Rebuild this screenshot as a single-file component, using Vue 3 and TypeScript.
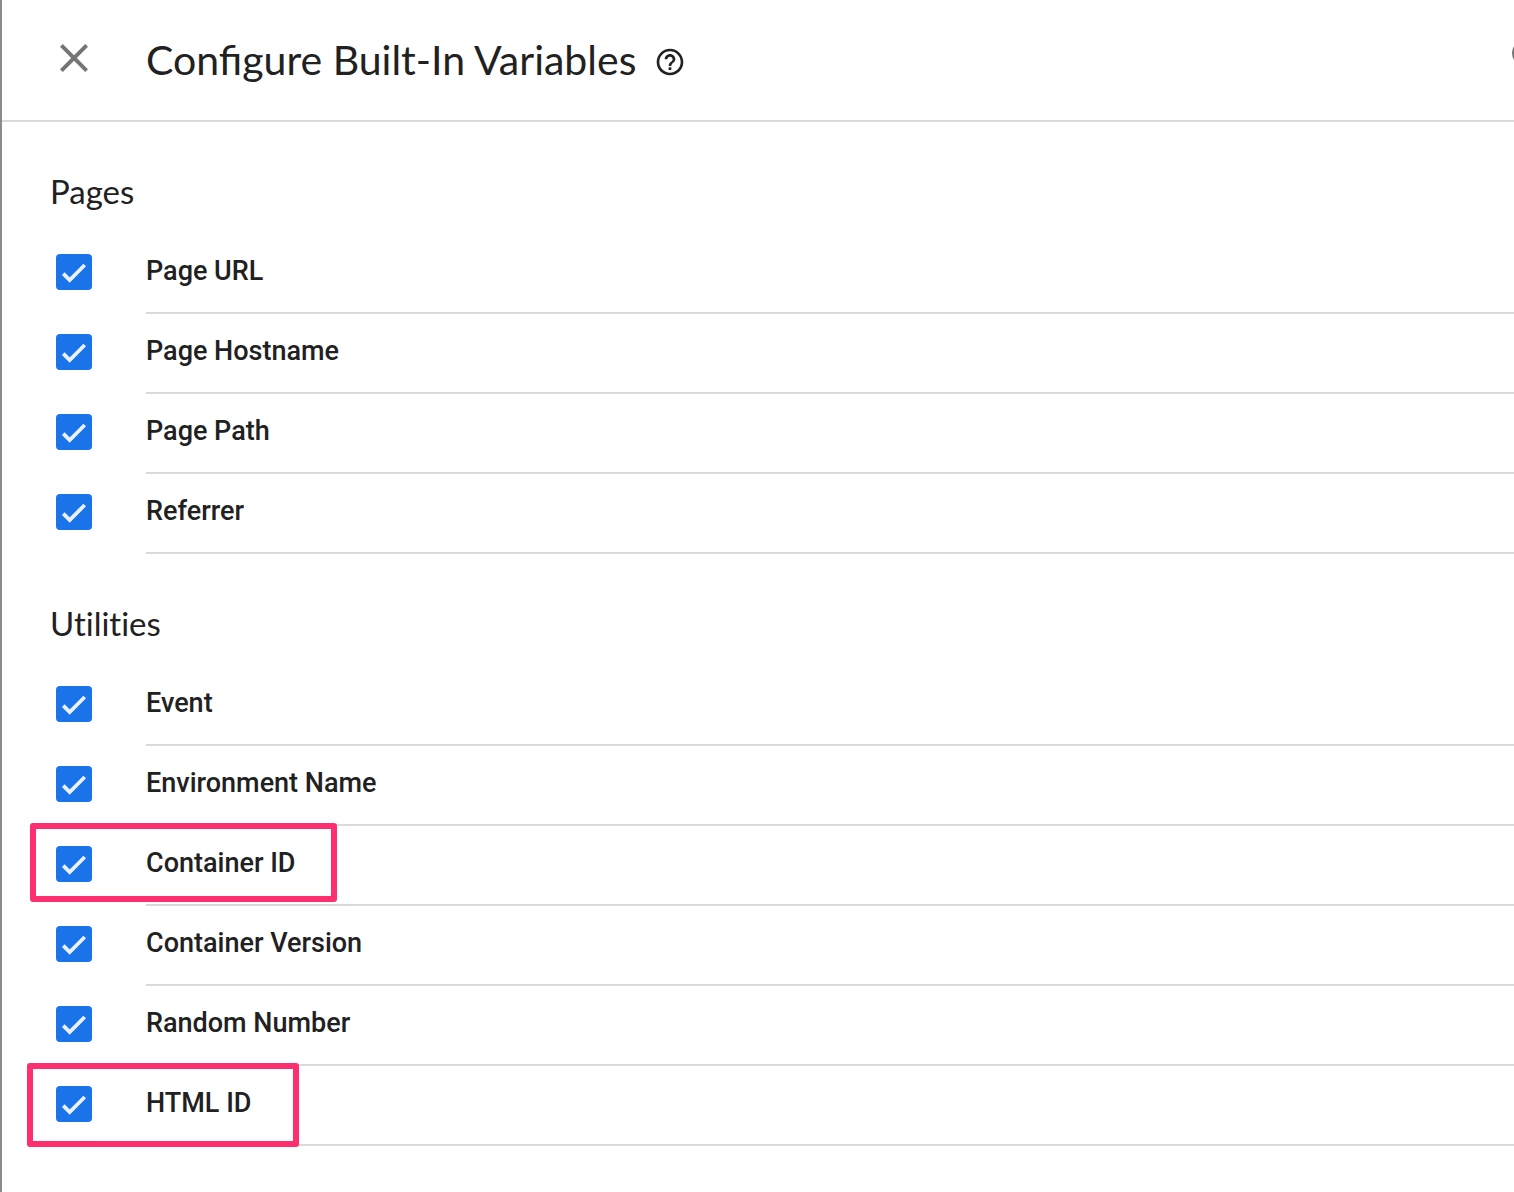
<script setup lang="ts">
import { reactive } from 'vue'

interface Variable {
  id: string
  label: string
  enabled: boolean
  highlight?: string
}

interface Group {
  title: string
  variables: Variable[]
}

const groups = reactive<Group[]>([
  {
    title: 'Pages',
    variables: [
      { id: 'page-url', label: 'Page URL', enabled: true },
      { id: 'page-hostname', label: 'Page Hostname', enabled: true },
      { id: 'page-path', label: 'Page Path', enabled: true },
      { id: 'referrer', label: 'Referrer', enabled: true },
    ],
  },
  {
    title: 'Utilities',
    variables: [
      { id: 'event', label: 'Event', enabled: true },
      { id: 'environment-name', label: 'Environment Name', enabled: true },
      { id: 'container-id', label: 'Container ID', enabled: true, highlight: 'mark-container' },
      { id: 'container-version', label: 'Container Version', enabled: true },
      { id: 'random-number', label: 'Random Number', enabled: true },
      { id: 'html-id', label: 'HTML ID', enabled: true, highlight: 'mark-html' },
    ],
  },
])
</script>

<template>
  <main class="panel">
    <header class="bar">
      <button class="icon-button" type="button" aria-label="Close">
        <svg width="48" height="48" viewBox="0 0 24 24" aria-hidden="true">
          <path d="M19 6.41 17.59 5 12 10.59 6.41 5 5 6.41 10.59 12 5 17.59 6.41 19 12 13.41 17.59 19 19 17.59 13.41 12z" />
        </svg>
      </button>
      <h1 class="title">Configure Built-In Variables</h1>
      <button class="icon-button help" type="button" aria-label="Help">
        <svg width="32" height="32" viewBox="0 0 24 24" aria-hidden="true">
          <path d="M11 18h2v-2h-2v2zm1-16C6.48 2 2 6.48 2 12s4.48 10 10 10 10-4.48 10-10S17.52 2 12 2zm0 18c-4.41 0-8-3.59-8-8s3.59-8 8-8 8 3.59 8 8-3.59 8-8 8zm0-14c-2.21 0-4 1.79-4 4h2c0-1.1.9-2 2-2s2 .9 2 2c0 2-3 1.75-3 5h2c0-2.25 3-2.5 3-5 0-2.21-1.79-4-4-4z" />
        </svg>
      </button>
      <button class="icon-button search" type="button" aria-label="Search">
        <svg width="48" height="48" viewBox="0 0 24 24" aria-hidden="true">
          <path d="M15.5 14h-.79l-.28-.27A6.47 6.47 0 0 0 16 9.5 6.5 6.5 0 1 0 9.5 16c1.61 0 3.09-.59 4.23-1.57l.27.28v.79l5 4.99L20.49 19l-4.99-5zm-6 0C7.01 14 5 11.99 5 9.5S7.01 5 9.5 5 14 7.01 14 9.5 11.99 14 9.5 14z" />
        </svg>
      </button>
    </header>

    <section v-for="group in groups" :key="group.title">
      <h2 class="group-title">{{ group.title }}</h2>
      <ul class="list">
        <li v-for="item in group.variables" :key="item.id" class="row">
          <span class="check">
            <input :id="item.id" v-model="item.enabled" type="checkbox" />
            <svg v-if="item.enabled" width="36" height="36" viewBox="0 0 36 36" aria-hidden="true">
              <path d="M7.3 19.6 13.7 26 28.7 11" />
            </svg>
          </span>
          <label class="name" :for="item.id">{{ item.label }}</label>
          <span v-if="item.highlight" class="mark" :class="item.highlight"></span>
        </li>
      </ul>
    </section>
  </main>
</template>

<style>
body {
  margin: 0;
  background: #fff;
}
</style>

<style scoped>
.panel {
  box-sizing: border-box;
  min-height: 100vh;
  border-left: 2px solid #8b8b8b;
  background: #fff;
  color: #212122;
  font-family: Roboto, "Liberation Sans", sans-serif;
}

.bar {
  display: flex;
  align-items: flex-start;
  box-sizing: border-box;
  height: 122px;
  padding: 34px 0 0 48px;
  border-bottom: 2px solid #dadada;
  overflow: hidden;
}

.icon-button {
  flex: none;
  display: block;
  padding: 0;
  border: 0;
  background: none;
  cursor: pointer;
}

.icon-button svg {
  display: block;
  fill: #757575;
}

.title {
  margin: 0 0 0 48px;
  font-family: Lato, sans-serif;
  font-size: 41px;
  line-height: 52px;
  font-weight: 400;
  white-space: nowrap;
}

.help {
  margin: 12px 0 0 18px;
}

.help svg {
  fill: #212122;
}

.search {
  margin: 0 -40px 0 auto;
}

.group-title {
  margin: 0;
  padding: 48px 48px 22px;
  font-family: Lato, sans-serif;
  font-size: 33px;
  line-height: 42px;
  font-weight: 400;
  font-variant-ligatures: none;
}

.list {
  margin: 0;
  padding: 0;
  list-style: none;
}

.row {
  position: relative;
  display: flex;
  height: 80px;
  padding-left: 54px;
}

.check {
  flex: none;
  display: grid;
  width: 36px;
  height: 36px;
  margin: 20px 54px 0 0;
}

.check input,
.check svg {
  grid-area: 1 / 1;
}

.check input {
  appearance: none;
  width: 36px;
  height: 36px;
  margin: 0;
  border: 4px solid #757575;
  border-radius: 4px;
}

.check input:checked {
  border: 0;
  background: #1a73e8;
}

.check svg {
  fill: none;
  stroke: #eaf1fd;
  stroke-width: 3.8;
  pointer-events: none;
}

.name {
  flex: 1;
  box-sizing: border-box;
  padding-top: 20px;
  border-bottom: 2px solid #dadada;
  font-size: 27px;
  line-height: 34px;
  font-weight: 500;
}

.mark {
  position: absolute;
  box-sizing: border-box;
  border: 6px solid #fd2f6e;
  border-radius: 3px;
  pointer-events: none;
}

.mark-container {
  top: -3px;
  left: 28px;
  width: 307px;
  height: 79px;
}

.mark-html {
  top: -3px;
  left: 25px;
  width: 272px;
  height: 84px;
}
</style>
